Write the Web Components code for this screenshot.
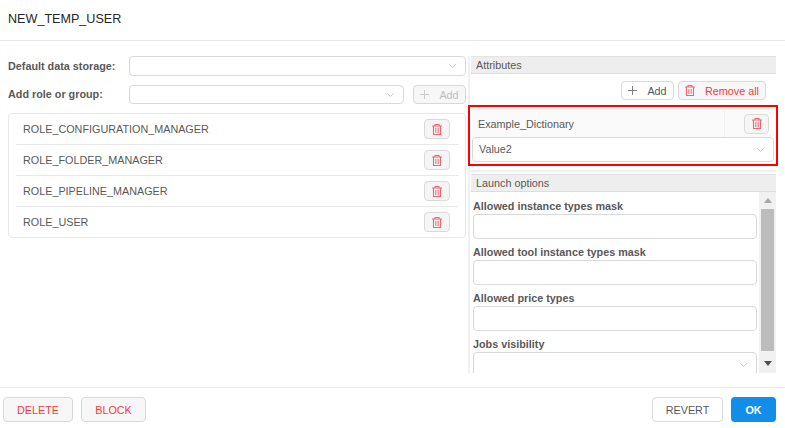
<!DOCTYPE html>
<html><head><meta charset="utf-8">
<style>
html,body{margin:0;padding:0;background:#fff;}
body{width:785px;height:428px;overflow:hidden;font-family:"Liberation Sans",Arial,sans-serif;font-size:10.8px;color:#595959;}
</style></head><body>
<user-dialog></user-dialog>
<script>
const TRASH=`<svg viewBox="0 0 10 11" width="10" height="11" fill="none" stroke="#f2656f" stroke-width="1.100"><path d="M0 2h10M3 2V.5h4V2M1.500 2v8.500h7V2"/><path d="M3.500 4v5M5 4v5M6.500 4v5" stroke-width=".9" stroke="#f48a92"/></svg>`;
const CHEV=`<svg viewBox="0 0 7 4" width="7" height="4" fill="none" stroke="#c4c4c4" stroke-width=".9"><path d="M.3.3l3.200 3.200L6.700.3"/></svg>`;
const PLUS=`<svg viewBox="0 0 9 9" width="9" height="9" fill="none" stroke="currentColor" stroke-width="1" opacity=".75"><path d="M4.500 0v9M0 4.500h9"/></svg>`;
function def(name,html){
  customElements.define(name,class extends HTMLElement{
    connectedCallback(){ if(this.shadowRoot) return; const r=this.attachShadow({mode:'open'}); r.innerHTML=html;}
  });
}
def('ui-select',`<style>
:host{display:block;box-sizing:border-box;height:var(--h,20px);border:1px solid #d9d9d9;border-radius:4px;background:#fff;}
.w{display:flex;align-items:center;height:100%;padding:0 9px 0 6px;color:#595959;font-size:10.8px}
.t{flex:1;position:relative;top:-.5px}svg{display:block}
</style><div class="w"><span class="t"><slot></slot></span>${CHEV}</div>`);
def('ui-input',`<style>:host{display:block;box-sizing:border-box;height:25px;border:1px solid #d9d9d9;border-radius:4px;background:#fff;}</style>`);
def('ui-button',`<style>
:host{display:inline-flex;box-sizing:border-box;align-items:center;justify-content:center;height:var(--h,19px);border:1px solid #d9d9d9;border-radius:4px;background:var(--bg,#fff);color:var(--c,#595959);font-size:var(--fs,10.8px);font-weight:400;gap:var(--g,0);white-space:nowrap;}
::slotted(svg){display:block}
</style><slot></slot>`);
def('icon-btn',`<style>:host{display:inline-flex;box-sizing:border-box;width:var(--w,26px);height:20px;align-items:center;justify-content:center;border:1px solid #d9d9d9;border-radius:4px;background:#f5f5f5}svg{display:block}</style>${TRASH}`);
def('role-row',`<style>
:host{display:flex;box-sizing:border-box;height:31px;align-items:center;justify-content:space-between;margin:0 7px;padding:0 8px 0 7px;border-bottom:1px solid #e8e8e8;font-size:10.8px;color:#595959}
:host(:last-child){border-bottom-color:transparent}
</style><slot></slot><icon-btn></icon-btn>`);
def('section-head',`<style>:host{display:block;box-sizing:border-box;height:18px;line-height:16px;padding-left:5px;background:#eee;border-top:1px solid #e3e3e3;border-bottom:1px solid #dcdcdc;font-size:10.8px;color:#595959}</style><slot></slot>`);
def('opt-field',`<style>
:host{display:block;margin-bottom:5px}
.l{display:block;font-weight:700;font-size:10.8px;line-height:17px;color:#595959;height:15px;margin-bottom:1px}
</style><span class="l"><slot name="label"></slot></span><slot></slot>`);
def('user-dialog',`<style>
:host{display:flex;flex-direction:column;width:785px;height:428px;box-sizing:border-box;font-family:"Liberation Sans",Arial,sans-serif}
header{box-sizing:border-box;height:41px;border-bottom:1px solid #e8e8e8;padding:0 8px;line-height:39px;font-size:12.6px;color:#262626}
main{flex:none;height:346px;display:flex;padding:15px 9px 0 8px;box-sizing:border-box}
.left{width:458px;flex:none}
.gutter{width:5px;flex:none;height:317px;box-sizing:border-box;padding-left:1.500px}
.gutter i{display:block;width:2px;height:100%;background:#f0f0f0}
.right{flex:1;display:flex;flex-direction:column;min-width:0}
.form{display:grid;grid-template-columns:121px 1fr 53px;grid-template-rows:20px 19px;row-gap:9px;align-items:center;column-gap:0;font-weight:700;color:#595959}
.form .full{grid-column:2 / 4}
.form .sm{margin-right:9px}
.form .lift{margin-bottom:2px}
.roles{margin-top:9px;border:1px solid #e8e8e8;border-radius:4px;box-sizing:border-box;height:125px}
.actions{display:flex;justify-content:flex-end;gap:4px;padding:7px 10px 0 0;height:19px;box-sizing:content-box;margin-bottom:5px}
.attr{box-sizing:border-box;border:2px solid #f00;margin-left:-3px;width:310px;height:61px;padding:2px 2px 0 2px;flex:none}
.attr-head{box-sizing:border-box;height:28px;background:#fafafa;display:flex;align-items:center;border-top:1px solid #eee;padding-left:6px;font-size:10.8px;color:#595959;justify-content:space-between;--w:25px}
.attr-head .cell{display:flex;align-items:center;justify-content:flex-end;padding-right:5px;box-sizing:border-box;width:50px;height:100%;border-left:1px solid #f1f1f1}
.sep{height:2px;background:#f0f0f0;margin-top:4px;margin-bottom:2px;flex:none}
.scrollwrap{flex:none;display:flex;overflow:hidden;height:181px}
.opts{flex:1;min-width:0;padding:6px 2px 0 2px;overflow:hidden}
.bar{width:17px;flex:none;background:#f1f1f1;display:flex;flex-direction:column;align-items:center}
.up,.dn{height:17px;flex:none;display:flex;align-items:center;justify-content:center}
.dn{margin-top:4px}
.up svg{fill:#a6a6a6}.dn svg{fill:#505050}
.thumb{flex:none;height:142px;width:13px;background:#bcbcbc}
footer{flex:none;height:41px;border-top:1px solid #e8e8e8;display:flex;align-items:flex-start;justify-content:space-between;padding:9px 9px 0 3px;box-sizing:border-box}
.g{display:flex;gap:8px}
.danger{--c:#f83a3a;--bg:#f7f7f7;--h:25px}
.plain{--h:25px}
.ok{--h:25px;--bg:#108ee9;--c:#fff;font-weight:700}
</style>
<header>NEW_TEMP_USER</header>
<main>
 <div class="left">
  <div class="form">
    <span>Default data storage:</span><ui-select class="full"></ui-select>
    <span class="lift">Add role or group:</span><ui-select class="sm" style="--h:19px"></ui-select>
    <ui-button style="--bg:#f7f7f7;--c:#bdbdbd;--g:10px;width:53px">${PLUS}<span>Add</span></ui-button>
  </div>
  <div class="roles">
    <role-row>ROLE_CONFIGURATION_MANAGER</role-row>
    <role-row>ROLE_FOLDER_MANAGER</role-row>
    <role-row>ROLE_PIPELINE_MANAGER</role-row>
    <role-row>ROLE_USER</role-row>
  </div>
 </div>
 <div class="gutter"><i></i></div>
 <div class="right">
  <section-head>Attributes</section-head>
  <div class="actions">
    <ui-button style="width:53px;--g:10px">${PLUS}<span>Add</span></ui-button>
    <ui-button style="width:88px;--g:10px;--c:#f83a3a;--bg:#f7f7f7">${TRASH}<span>Remove all</span></ui-button>
  </div>
  <div class="attr">
    <div class="attr-head"><span>Example_Dictionary</span><span class="cell"><icon-btn></icon-btn></span></div>
    <ui-select style="--h:25px">Value2</ui-select>
  </div>
  <div class="sep"></div>
  <section-head>Launch options</section-head>
  <div class="scrollwrap">
   <div class="opts">
    <opt-field><span slot="label">Allowed instance types mask</span><ui-input></ui-input></opt-field>
    <opt-field><span slot="label">Allowed tool instance types mask</span><ui-input></ui-input></opt-field>
    <opt-field><span slot="label">Allowed price types</span><ui-input></ui-input></opt-field>
    <opt-field><span slot="label">Jobs visibility</span><ui-select style="--h:25px"></ui-select></opt-field>
   </div>
   <div class="bar"><div class="up"><svg viewBox="0 0 8 5" width="8" height="5"><path d="M4 0l4 5H0z"/></svg></div><div class="thumb"></div><div class="dn"><svg viewBox="0 0 8 5" width="8" height="5"><path d="M0 0h8L4 5z"/></svg></div></div>
  </div>
 </div>
</main>
<footer>
 <div class="g"><ui-button class="danger" style="width:70px">DELETE</ui-button><ui-button class="danger" style="width:65px">BLOCK</ui-button></div>
 <div class="g"><ui-button class="plain" style="width:71px">REVERT</ui-button><ui-button class="ok" style="width:45px;border:0">OK</ui-button></div>
</footer>`);
</script>
</body></html>
